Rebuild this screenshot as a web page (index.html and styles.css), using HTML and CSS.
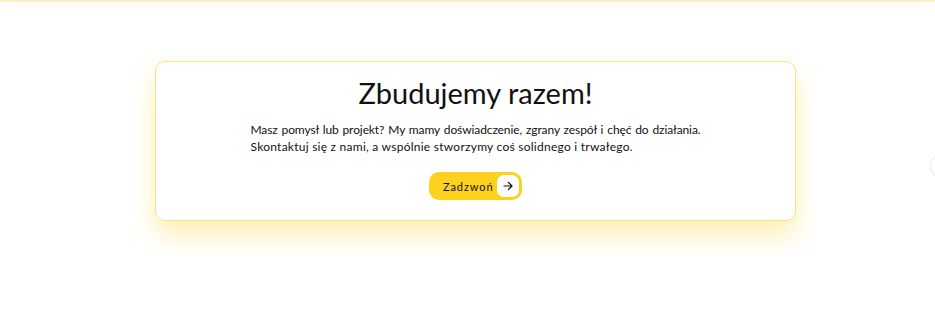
FILE: index.html
```html
<!DOCTYPE html>
<html lang="pl">
<head>
    <meta charset="utf-8">
    <title>Zbudujemy razem!</title>
    <link rel="stylesheet" href="styles.css">
</head>
<body>
    <div class="topBar"></div>
    <main class="page">
        <section class="ctaCard">
            <h2>Zbudujemy razem!</h2>
            <p>
                <span class="lineFull">Masz pomysł lub projekt? My mamy doświadczenie, zgrany zespół i chęć do działania.</span>
                <span class="lineRest">Skontaktuj się z nami, a wspólnie stworzymy coś solidnego i trwałego.</span>
            </p>
            <a class="callBtn" href="#">
                <span>Zadzwoń</span>
                <span class="arrowBox">
                    <svg width="10" height="10" viewBox="0 0 10 10">
                        <path d="M1 5h8M5.5 1.5 9 5 5.5 8.5" fill="none" stroke="#111" stroke-width="1.2" stroke-linecap="round" stroke-linejoin="round"/>
                    </svg>
                </span>
            </a>
        </section>
    </main>
    <!-- side handle peeking in from the edge -->
    <div class="sideHandle"></div>
</body>
</html>
```

FILE: styles.css
```css
body {
    margin: 0px;
    padding: 0px;
    background-color: #ffffff;
    color: #111111;
    font-family: 'Lato', 'Open Sans', sans-serif;
    overflow: hidden;
}

.topBar {
    height: 2px;
    background-color: #fbefc4;
    box-shadow: 0px 2px 12px rgba(253, 225, 120, 0.25);
}

.page {
    display: flex;
    justify-content: center;
    padding: 59px 0px 60px 16px;
}

.ctaCard {
    width: 641px;
    height: 160px;
    box-sizing: border-box;
    border: 1px solid #f8e38a;
    border-radius: 10px;
    background-color: #ffffff;
    box-shadow: 0px 14px 26px rgba(253, 212, 50, 0.38);
    display: flex;
    flex-direction: column;
    align-items: center;
    padding-top: 13px;
}

.ctaCard h2 {
    margin: 0px;
    font-size: 29px;
    font-weight: 400;
    line-height: 36px;
}

.ctaCard p {
    width: 450px;
    margin: 10px 0px 0px;
    font-size: 12px;
    line-height: 17px;
}

.ctaCard p span {
    display: block;
}

.ctaCard p .lineFull {
    white-space: nowrap;
    word-spacing: -1.5px;
    letter-spacing: -0.1px;
    text-align: justify;
    text-align-last: justify;
}

.ctaCard p .lineRest {
    letter-spacing: 0.25px;
}

.callBtn {
    margin-top: 17px;
    height: 28px;
    width: 93px;
    box-sizing: border-box;
    background-color: #fdd21f;
    border-radius: 10px;
    display: flex;
    align-items: center;
    justify-content: space-between;
    padding: 0px 3px 0px 14px;
    color: #111111;
    text-decoration: none;
    font-size: 11px;
    font-weight: 400;
    letter-spacing: 0.9px;
}

.arrowBox {
    width: 22px;
    height: 22px;
    border-radius: 7px;
    background-color: #ffffff;
    display: flex;
    align-items: center;
    justify-content: center;
}

.sideHandle {
    position: fixed;
    right: -8px;
    top: 157px;
    width: 12px;
    height: 18px;
    border-radius: 50%;
    background-color: #ffffff;
    box-shadow: 0px 0px 3px rgba(0, 0, 0, 0.18);
}
```
